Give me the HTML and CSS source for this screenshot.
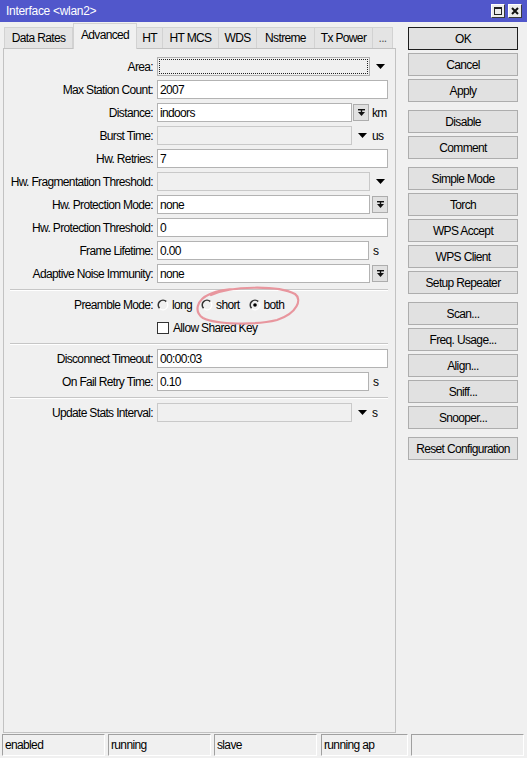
FILE: index.html
```html
<!DOCTYPE html>
<html>
<head>
<meta charset="utf-8">
<title>Interface &lt;wlan2&gt;</title>
<link rel="stylesheet" href="styles.css">
</head>
<body>
<div class="window">
  <div class="titlebar">
    <span class="title">Interface &lt;wlan2&gt;</span>
    <div class="tbtns">
      <span class="tbtn"><svg width="12" height="12" viewBox="0 0 12 12"><rect x="2.5" y="2.5" width="7" height="7" fill="none" stroke="#222" stroke-width="1"/><rect x="2" y="2" width="8" height="2" fill="#222"/></svg></span>
      <span class="tbtn"><svg width="12" height="12" viewBox="0 0 12 12"><path d="M3 3 L9 9 M9 3 L3 9" stroke="#111" stroke-width="2"/></svg></span>
    </div>
  </div>

  <div class="main">
    <div class="left">
      <div class="tabs">
        <div class="tab t-dr">Data Rates</div>
        <div class="tab active t-adv">Advanced</div>
        <div class="tab t-ht">HT</div>
        <div class="tab t-htm">HT MCS</div>
        <div class="tab t-wds">WDS</div>
        <div class="tab t-ns">Nstreme</div>
        <div class="tab t-tx">Tx Power</div>
        <div class="tab t-more">...</div>
      </div>
      <div class="panel">
        <div class="row">
          <span class="lbl">Area:</span>
          <div class="inp w213 dis area"><span class="focus"></span></div>
          <svg class="arrow" width="9" height="5" viewBox="0 0 9 5"><path d="M0 0 H9 L4.5 5 Z" fill="#000"/></svg>
        </div>
        <div class="row">
          <span class="lbl">Max Station Count:</span>
          <div class="inp w231">2007</div>
        </div>
        <div class="row">
          <span class="lbl">Distance:</span>
          <div class="inp w195">indoors</div>
          <span class="ddbtn"><svg width="9" height="9" viewBox="0 0 9 9"><rect x="1" y="1" width="7" height="1.4" fill="#111"/><rect x="3.8" y="2" width="1.4" height="2" fill="#111"/><path d="M1 4 H8 L4.5 8 Z" fill="#111"/></svg></span>
          <span class="unit">km</span>
        </div>
        <div class="row">
          <span class="lbl">Burst Time:</span>
          <div class="inp w195 dis"></div>
          <svg class="arrow" width="9" height="5" viewBox="0 0 9 5"><path d="M0 0 H9 L4.5 5 Z" fill="#000"/></svg>
          <span class="unit u-after-arrow">us</span>
        </div>
        <div class="row">
          <span class="lbl">Hw. Retries:</span>
          <div class="inp w231">7</div>
        </div>
        <div class="row">
          <span class="lbl">Hw. Fragmentation Threshold:</span>
          <div class="inp w213 dis"></div>
          <svg class="arrow" width="9" height="5" viewBox="0 0 9 5"><path d="M0 0 H9 L4.5 5 Z" fill="#000"/></svg>
        </div>
        <div class="row">
          <span class="lbl">Hw. Protection Mode:</span>
          <div class="inp w213">none</div>
          <span class="ddbtn wide"><svg width="9" height="9" viewBox="0 0 9 9"><rect x="1" y="1" width="7" height="1.4" fill="#111"/><rect x="3.8" y="2" width="1.4" height="2" fill="#111"/><path d="M1 4 H8 L4.5 8 Z" fill="#111"/></svg></span>
        </div>
        <div class="row">
          <span class="lbl">Hw. Protection Threshold:</span>
          <div class="inp w231">0</div>
        </div>
        <div class="row">
          <span class="lbl">Frame Lifetime:</span>
          <div class="inp w212">0.00</div>
          <span class="unit u-s">s</span>
        </div>
        <div class="row">
          <span class="lbl">Adaptive Noise Immunity:</span>
          <div class="inp w213">none</div>
          <span class="ddbtn wide"><svg width="9" height="9" viewBox="0 0 9 9"><rect x="1" y="1" width="7" height="1.4" fill="#111"/><rect x="3.8" y="2" width="1.4" height="2" fill="#111"/><path d="M1 4 H8 L4.5 8 Z" fill="#111"/></svg></span>
        </div>

        <div class="sep"></div>

        <div class="row">
          <span class="lbl">Preamble Mode:</span>
          <span class="radio">
            <svg width="12" height="12" viewBox="0 0 12 12"><path d="M9.4 2.6 A4.8 4.8 0 0 0 2.6 9.4" fill="none" stroke="#333" stroke-width="1.5"/><path d="M2.6 9.4 A4.8 4.8 0 0 0 9.4 2.6" fill="none" stroke="#ffffff" stroke-width="1.3"/></svg>
            <span>long</span>
          </span>
          <span class="radio">
            <svg width="12" height="12" viewBox="0 0 12 12"><path d="M9.4 2.6 A4.8 4.8 0 0 0 2.6 9.4" fill="none" stroke="#333" stroke-width="1.5"/><path d="M2.6 9.4 A4.8 4.8 0 0 0 9.4 2.6" fill="none" stroke="#ffffff" stroke-width="1.3"/></svg>
            <span>short</span>
          </span>
          <span class="radio">
            <svg width="12" height="12" viewBox="0 0 12 12"><path d="M9.4 2.6 A4.8 4.8 0 0 0 2.6 9.4" fill="none" stroke="#333" stroke-width="1.5"/><path d="M2.6 9.4 A4.8 4.8 0 0 0 9.4 2.6" fill="none" stroke="#ffffff" stroke-width="1.3"/><circle cx="6" cy="6" r="1.8" fill="#000"/></svg>
            <span>both</span>
          </span>
        </div>
        <div class="row">
          <span class="lbl"></span>
          <span class="check"><span class="box"></span><span>Allow Shared Key</span></span>
        </div>

        <div class="sep"></div>

        <div class="row">
          <span class="lbl">Disconnect Timeout:</span>
          <div class="inp w231">00:00:03</div>
        </div>
        <div class="row">
          <span class="lbl">On Fail Retry Time:</span>
          <div class="inp w212">0.10</div>
          <span class="unit u-s">s</span>
        </div>

        <div class="sep"></div>

        <div class="row">
          <span class="lbl">Update Stats Interval:</span>
          <div class="inp w195 dis"></div>
          <svg class="arrow" width="9" height="5" viewBox="0 0 9 5"><path d="M0 0 H9 L4.5 5 Z" fill="#000"/></svg>
          <span class="unit u-after-arrow">s</span>
        </div>

        <svg class="annot" width="112" height="44" viewBox="0 0 112 44"><path d="M20 11 C40 2, 86 1, 104 10 C111 15, 107 29, 86 36 C66 41, 26 41, 12 34 C3 28, 5 16, 19 10 C28 6, 36 5, 46 5" fill="none" stroke="#e8969e" stroke-width="2.2" stroke-linecap="round"/></svg>
      </div>
    </div>

    <div class="right">
      <div class="group">
        <button class="btn default">OK</button>
        <button class="btn">Cancel</button>
        <button class="btn">Apply</button>
      </div>
      <div class="group">
        <button class="btn">Disable</button>
        <button class="btn">Comment</button>
      </div>
      <div class="group">
        <button class="btn">Simple Mode</button>
        <button class="btn">Torch</button>
        <button class="btn">WPS Accept</button>
        <button class="btn">WPS Client</button>
        <button class="btn">Setup Repeater</button>
      </div>
      <div class="group">
        <button class="btn">Scan...</button>
        <button class="btn">Freq. Usage...</button>
        <button class="btn">Align...</button>
        <button class="btn">Sniff...</button>
        <button class="btn">Snooper...</button>
      </div>
      <div class="group">
        <button class="btn">Reset Configuration</button>
      </div>
    </div>
  </div>

  <div class="status">
    <div class="cell c1">enabled</div>
    <div class="cell c2">running</div>
    <div class="cell c3">slave</div>
    <div class="cell c4">running ap</div>
    <div class="cell c5"></div>
  </div>
</div>
</body>
</html>
```

FILE: styles.css
```css
html, body {
  margin: 0;
  padding: 0;
  background: #f0f0f0;
}

body {
  font-family: "Liberation Sans", Arial, sans-serif;
  font-size: 12px;
  letter-spacing: -0.65px;
  color: #000;
}

.window {
  width: 527px;
  height: 758px;
  display: flex;
  flex-direction: column;
  background: #f0f0f0;
  overflow: hidden;
}

/* title bar */
.titlebar {
  height: 22px;
  flex: none;
  background: #5157cb;
  color: #fff;
  display: flex;
  align-items: center;
  justify-content: space-between;
  padding: 0 5px 0 6px;
  box-sizing: border-box;
}

.title {
  letter-spacing: -0.3px;
}

.tbtns {
  display: flex;
  gap: 3px;
}

.tbtn {
  width: 14px;
  height: 14px;
  box-sizing: border-box;
  background: #ececec;
  border: 1px solid;
  border-color: #ffffff #3a3a3a #3a3a3a #ffffff;
  display: flex;
  align-items: center;
  justify-content: center;
}

/* main */
.main {
  flex: 1;
  display: flex;
  min-height: 0;
}

.left {
  width: 393px;
  margin-left: 3px;
  display: flex;
  flex-direction: column;
  padding-bottom: 1px;
  box-sizing: border-box;
}

.tabs {
  height: 26px;
  flex: none;
  display: flex;
  align-items: flex-end;
  padding-left: 1px;
}

.tab {
  height: 21px;
  box-sizing: border-box;
  border: 1px solid #d2d2d2;
  border-bottom: none;
  background: #e4e4e4;
  display: flex;
  align-items: center;
  justify-content: center;
  white-space: nowrap;
}

.tab + .tab {
  border-left: none;
}

.tab.active {
  height: 26px;
  margin-bottom: -1px;
  background: #f0f0f0;
  position: relative;
  z-index: 1;
  border-left: 1px solid #d2d2d2;
  padding-bottom: 3px;
}

.t-dr { width: 69px; }
.t-adv { width: 64px; }
.t-ht { width: 26px; }
.t-htm { width: 56px; }
.t-wds { width: 38px; }
.t-ns { width: 58px; }
.t-tx { width: 58px; }
.t-more { width: 20px; color: #555; }

.panel {
  flex: 1;
  position: relative;
  border: 1px solid #c2c2c2;
  padding-top: 6px;
  box-sizing: border-box;
}

.row {
  height: 23px;
  display: flex;
  align-items: center;
}

.lbl {
  width: 149px;
  flex: none;
  margin-right: 4px;
  text-align: right;
  white-space: nowrap;
}

.inp {
  height: 19px;
  box-sizing: border-box;
  border: 1px solid #b3b3b3;
  background: #fff;
  padding: 0 2px;
  display: flex;
  align-items: center;
  flex: none;
}

.inp.dis {
  background: #f0f0f0;
  border-color: #c9c9c9;
}

.inp.area {
  padding: 1px;
  border-color: #b0b0b0;
}

.focus {
  flex: 1;
  align-self: stretch;
  border: 1px dotted #222;
}

.w231 { width: 231px; }
.w213 { width: 213px; }
.w212 { width: 212px; }
.w195 { width: 195px; }

.arrow {
  flex: none;
  margin-left: 6px;
}

.ddbtn {
  width: 16px;
  height: 17px;
  box-sizing: border-box;
  border: 1px solid #adadad;
  background: #e1e1e1;
  margin-left: 1px;
  display: flex;
  align-items: center;
  justify-content: center;
  flex: none;
}

.ddbtn.wide {
  margin-left: 2px;
}

.unit {
  margin-left: 3px;
}

.unit.u-after-arrow {
  margin-left: 5px;
}

.unit.u-s {
  margin-left: 4px;
}

.sep {
  height: 0;
  border-top: 1px solid #c6c6c6;
  border-bottom: 1px solid #ffffff;
  margin: 4px 7px 2px 6px;
}

/* radios */
.radio {
  display: inline-flex;
  align-items: center;
  gap: 3px;
  margin-right: 9px;
}

.radio svg {
  display: block;
}

.check {
  display: inline-flex;
  align-items: center;
  gap: 4px;
}

.check .box {
  width: 12px;
  height: 12px;
  box-sizing: border-box;
  border: 1px solid #333;
  background: #fff;
}

.annot {
  position: absolute;
  left: 187px;
  top: 235px;
  pointer-events: none;
}

/* right buttons */
.right {
  width: 110px;
  margin-left: 12px;
  padding-top: 5px;
  display: flex;
  flex-direction: column;
  gap: 8px;
}

.group {
  display: flex;
  flex-direction: column;
  gap: 3px;
}

.btn {
  height: 23px;
  width: 110px;
  box-sizing: border-box;
  border: 1px solid #adadad;
  background: #e1e1e1;
  font-family: "Liberation Sans", Arial, sans-serif;
  font-size: 12px;
  letter-spacing: -0.65px;
  color: #000;
  padding: 0;
  margin: 0;
}

.btn.default {
  border-color: #1e1e1e;
}

/* status bar */
.status {
  height: 24px;
  flex: none;
  display: flex;
  padding: 0 0 2px 2px;
  box-sizing: border-box;
  gap: 3px;
}

.cell {
  height: 22px;
  box-sizing: border-box;
  border-top: 1px solid #a0a0a0;
  border-left: 1px solid #a0a0a0;
  border-right: 1px solid #ffffff;
  border-bottom: 1px solid #ffffff;
  padding-left: 2px;
  display: flex;
  align-items: center;
  white-space: nowrap;
}

.c1 { width: 103px; }
.c2 { width: 103px; }
.c3 { width: 103px; }
.c4 { width: 87px; margin-left: 1px; }
.c5 { width: 113px; }
```
